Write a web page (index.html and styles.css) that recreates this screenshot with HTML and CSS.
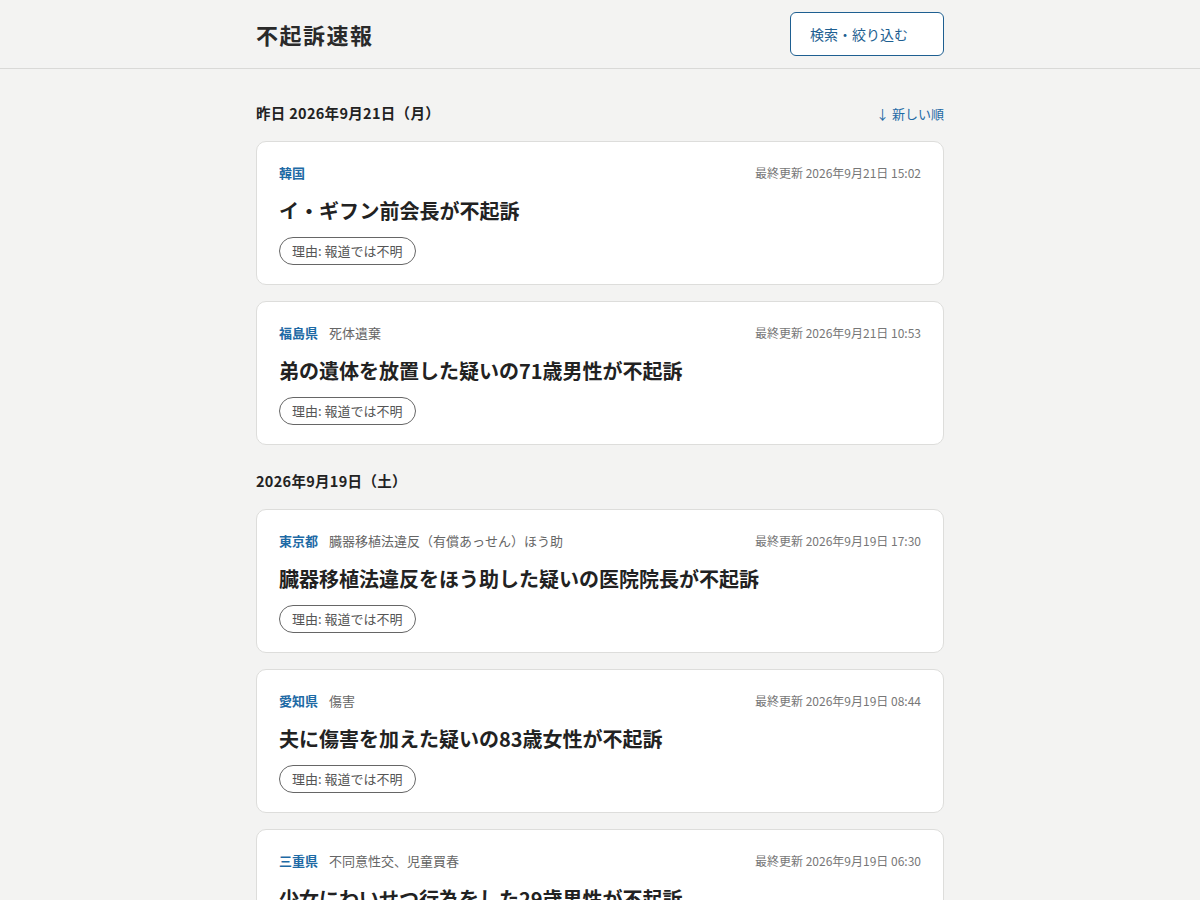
FILE: index.html
```html
<!DOCTYPE html>
<html lang="ja">
<head>
    <meta charset="UTF-8">
    <meta name="viewport" content="width=device-width, initial-scale=1.0">
    <title>不起訴速報</title>
    <link rel="stylesheet" href="styles.css">
</head>
<body>
    <header class="site-header">
        <div class="wrap header-inner">
            <h1 class="site-title">不起訴速報</h1>
            <button class="search-btn">検索・絞り込む</button>
        </div>
    </header>
    <main class="wrap">
        <section class="day">
            <div class="day-head">
                <h2 class="day-title">昨日 2026年9月21日（月）</h2>
                <a href="#" class="sort-link">↓ 新しい順</a>
            </div>
            <article class="card">
                <div class="card-meta">
                    <span class="pref">韓国</span>
                    <span class="updated">最終更新 2026年9月21日 15:02</span>
                </div>
                <h3 class="card-title">イ・ギフン前会長が不起訴</h3>
                <span class="reason">理由: 報道では不明</span>
            </article>
            <article class="card">
                <div class="card-meta">
                    <span class="pref">福島県</span>
                    <span class="charge">死体遺棄</span>
                    <span class="updated">最終更新 2026年9月21日 10:53</span>
                </div>
                <h3 class="card-title">弟の遺体を放置した疑いの71歳男性が不起訴</h3>
                <span class="reason">理由: 報道では不明</span>
            </article>
        </section>
        <section class="day">
            <div class="day-head">
                <h2 class="day-title">2026年9月19日（土）</h2>
            </div>
            <article class="card">
                <div class="card-meta">
                    <span class="pref">東京都</span>
                    <span class="charge">臓器移植法違反（有償あっせん）ほう助</span>
                    <span class="updated">最終更新 2026年9月19日 17:30</span>
                </div>
                <h3 class="card-title">臓器移植法違反をほう助した疑いの医院院長が不起訴</h3>
                <span class="reason">理由: 報道では不明</span>
            </article>
            <article class="card">
                <div class="card-meta">
                    <span class="pref">愛知県</span>
                    <span class="charge">傷害</span>
                    <span class="updated">最終更新 2026年9月19日 08:44</span>
                </div>
                <h3 class="card-title">夫に傷害を加えた疑いの83歳女性が不起訴</h3>
                <span class="reason">理由: 報道では不明</span>
            </article>
            <article class="card">
                <div class="card-meta">
                    <span class="pref">三重県</span>
                    <span class="charge">不同意性交、児童買春</span>
                    <span class="updated">最終更新 2026年9月19日 06:30</span>
                </div>
                <h3 class="card-title">少女にわいせつ行為をした29歳男性が不起訴</h3>
                <span class="reason">理由: 報道では不明</span>
            </article>
        </section>
    </main>
</body>
</html>
```

FILE: styles.css
```css
body {
    font-family: "Noto Sans CJK JP", "Noto Sans", sans-serif;
    margin: 0;
    padding: 0;
    background-color: #f3f3f2;
    color: #222;
}

.wrap {
    width: 688px;
    margin: 0 auto;
}

.site-header {
    border-bottom: 1px solid #d9d9d7;
}

.header-inner {
    display: flex;
    justify-content: space-between;
    align-items: center;
    height: 68px;
}

.site-title {
    font-size: 22px;
    font-weight: bold;
    margin: 0;
    color: #2a2a2a;
    letter-spacing: 1.5px;
}

.search-btn {
    width: 154px;
    height: 44px;
    padding: 0 19px;
    text-align: left;
    font-family: inherit;
    font-size: 14px;
    color: #1e5f91;
    background-color: #fff;
    border: 1px solid #1e5f91;
    border-radius: 6px;
    cursor: pointer;
}

.day {
    padding-top: 34px;
}

.day + .day {
    padding-top: 10px;
}

.day-head {
    display: flex;
    justify-content: space-between;
    align-items: center;
    margin-bottom: 18px;
}

.day-title {
    font-size: 14.5px;
    font-weight: bold;
    margin: 0;
    line-height: 20px;
    letter-spacing: 0.3px;
}

.sort-link {
    font-size: 13px;
    color: #1e6aa5;
    text-decoration: none;
}

.card {
    display: flex;
    flex-direction: column;
    align-items: flex-start;
    background-color: #fff;
    border: 1px solid #dddddb;
    border-radius: 10px;
    padding: 21px 22px 19px;
    margin-bottom: 16px;
}

.card-meta {
    display: flex;
    align-items: center;
    align-self: stretch;
    gap: 11px;
    font-size: 13px;
    line-height: 20px;
}

.pref {
    color: #1e6aa5;
    font-weight: bold;
}

.charge {
    color: #666;
}

.updated {
    margin-left: auto;
    color: #777;
    font-size: 12px;
}

.card-title {
    font-size: 20px;
    font-weight: bold;
    margin: 14px 0 12px;
    line-height: 28px;
    color: #222;
}

.reason {
    font-size: 13px;
    line-height: 26px;
    padding: 0 12px;
    border: 1px solid #666;
    border-radius: 14px;
    color: #555;
}
```
